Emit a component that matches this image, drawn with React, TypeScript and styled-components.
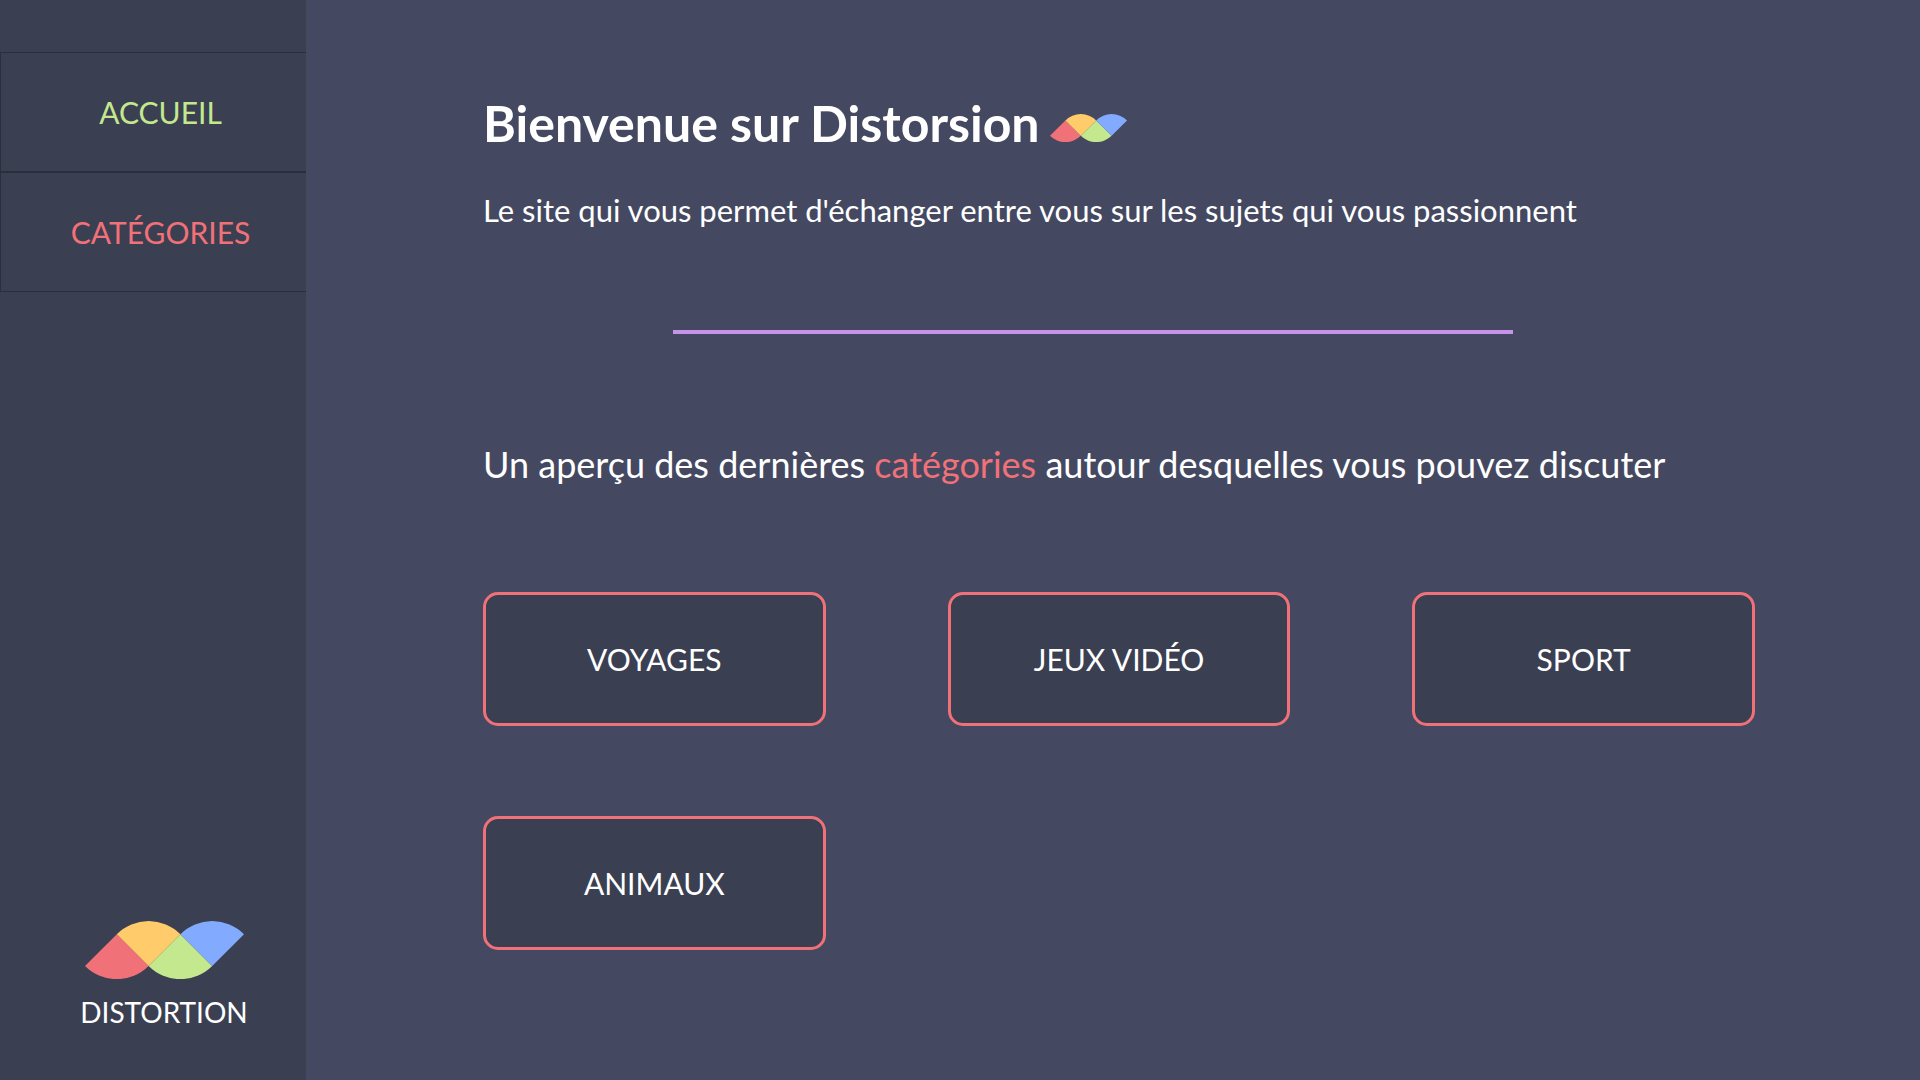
import React from "react";
import styled, { createGlobalStyle } from "styled-components";

const Global = createGlobalStyle`
  *, *::before, *::after { box-sizing: border-box; }
  body { margin: 0; background: #444961; }
`;

const font = `Lato, "Open Sans", sans-serif`;

const Page = styled.div`
  display: flex;
  min-height: 100vh;
  background: #444961;
  color: #ffffff;
  font-family: ${font};
`;

const Sidebar = styled.aside`
  display: flex;
  flex-direction: column;
  justify-content: space-between;
  flex: 0 0 306px;
  padding: 52px 0 50px;
  background: #3b3f52;
`;

const Nav = styled.nav`
  display: flex;
  flex-direction: column;
`;

const NavLink = styled.a<{ $color: string }>`
  display: flex;
  align-items: center;
  justify-content: center;
  height: 120px;
  padding-left: 14px;
  border: 1px solid #2c2e3e;
  border-right: 0;
  color: ${(p) => p.$color};
  font-size: 30px;
  line-height: 36px;
  text-decoration: none;
`;

const Brand = styled.div`
  display: flex;
  flex-direction: column;
  align-items: center;
  gap: 15px;
  padding-left: 22px;
  font-size: 28px;
  line-height: 36px;
`;

const Main = styled.main`
  flex: 1;
  min-width: 0;
  padding: 93px 165px 80px 177px;
`;

const Title = styled.h1`
  display: flex;
  align-items: center;
  gap: 10px;
  margin: 0;
  font-size: 50px;
  line-height: 60px;
  font-weight: 700;

  svg {
    margin-top: 10px;
  }
`;

const Lead = styled.p`
  margin: 39px 0 0;
  font-size: 31px;
  line-height: 36px;
`;

const Divider = styled.hr`
  height: 4px;
  margin: 102px 242px 0 190px;
  border: 0;
  background: #c792ea;
`;

const Subtitle = styled.h2`
  margin: 110px 0 0;
  font-size: 36px;
  line-height: 40px;
  font-weight: 400;
`;

const Accent = styled.a`
  color: #f07178;
  text-decoration: none;
`;

const Cards = styled.div`
  display: grid;
  grid-template-columns: repeat(3, 1fr);
  gap: 90px 122px;
  margin-top: 108px;
`;

const Card = styled.a`
  display: flex;
  align-items: center;
  justify-content: center;
  height: 134px;
  border: 3px solid #f07178;
  border-radius: 15px;
  background: #3b3f52;
  color: #ffffff;
  font-size: 30px;
  line-height: 36px;
  text-decoration: none;
`;

const Wave = ({ width }: { width: number }) => (
  <svg width={width} viewBox="0 0 50 18.284" aria-hidden="true">
    <path fill="#f07178" d="M10 4.142 0 14.142A14.142 14.142 0 0 0 20 14.142Z" />
    <path fill="#ffcb6b" d="M20 14.142 10 4.142A14.142 14.142 0 0 1 30 4.142Z" />
    <path fill="#c3e88d" d="M30 4.142 20 14.142A14.142 14.142 0 0 0 40 14.142Z" />
    <path fill="#82aaff" d="M40 14.142 30 4.142A14.142 14.142 0 0 1 50 4.142Z" />
  </svg>
);

const categories = ["VOYAGES", "JEUX VIDÉO", "SPORT", "ANIMAUX"];

export default function App() {
  return (
    <Page>
      <Global />
      <Sidebar>
        <Nav>
          <NavLink href="#accueil" $color="#c3e88d">ACCUEIL</NavLink>
          <NavLink href="#categories" $color="#f07178">CATÉGORIES</NavLink>
        </Nav>
        <Brand>
          <Wave width={159} />
          <span>DISTORTION</span>
        </Brand>
      </Sidebar>
      <Main>
        <Title>
          Bienvenue sur Distorsion
          <Wave width={77} />
        </Title>
        <Lead>Le site qui vous permet d'échanger entre vous sur les sujets qui vous passionnent</Lead>
        <Divider />
        <Subtitle>
          Un aperçu des dernières <Accent href="#categories">catégories</Accent> autour desquelles vous pouvez discuter
        </Subtitle>
        <Cards>
          {categories.map((name) => (
            <Card key={name} href={"#" + name.toLowerCase()}>{name}</Card>
          ))}
        </Cards>
      </Main>
    </Page>
  );
}
